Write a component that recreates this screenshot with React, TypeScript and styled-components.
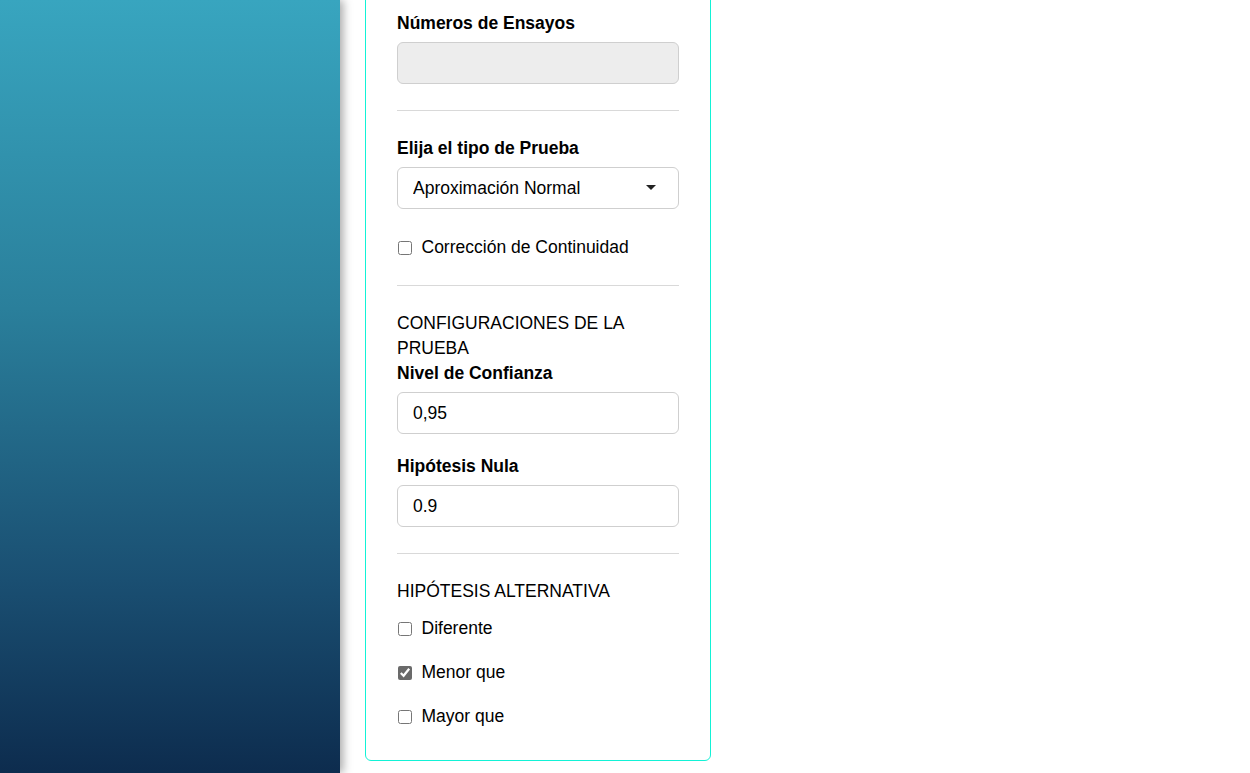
import styled, { createGlobalStyle } from 'styled-components';

const GlobalStyle = createGlobalStyle`
  html, body {
    margin: 0;
    padding: 0;
    background: #fff;
    overflow: hidden;
  }
  body {
    font-family: "Liberation Sans", Arial, sans-serif;
    color: #000;
  }
`;

const Layout = styled.div`
  display: flex;
  height: 773px;
`;

const Sidebar = styled.aside`
  flex: 0 0 340px;
  height: 100%;
  background: linear-gradient(180deg, #38a5bf 0%, #2a7f9b 40%, #1a4f72 75%, #0d2c4e 100%);
  box-shadow: 3px 0 9px rgba(0, 0, 0, 0.35);
  position: relative;
  z-index: 1;
`;

const Main = styled.main`
  flex: 1;
  padding-left: 25px;
`;

const Panel = styled.section`
  box-sizing: border-box;
  width: 346px;
  margin-top: -20px;
  padding: 30px 31px 31px;
  border: 1px solid #12f2d6;
  border-radius: 6px;
`;

const Field = styled.div<{ $gap?: number }>`
  display: flex;
  flex-direction: column;
  margin-bottom: ${(p) => p.$gap ?? 0}px;
`;

const Label = styled.label`
  font-size: 17.5px;
  font-weight: 700;
  line-height: 25px;
  margin-bottom: 6px;
`;

const Heading = styled.div`
  font-size: 17.5px;
  line-height: 25px;
  text-transform: uppercase;
`;

const Input = styled.input`
  box-sizing: border-box;
  height: 42px;
  width: 100%;
  padding: 0 15px;
  border: 1px solid #cfcfcf;
  border-radius: 6px;
  font-family: inherit;
  font-size: 17.5px;
  color: #000;
  background: #fff;
  outline: none;

  &:disabled {
    background: #ededed;
  }
`;

const SelectWrap = styled.div`
  position: relative;

  &::after {
    content: '';
    position: absolute;
    right: 23px;
    top: 18px;
    border-left: 5.5px solid transparent;
    border-right: 5.5px solid transparent;
    border-top: 5.5px solid #222;
    pointer-events: none;
  }
`;

const Select = styled.select`
  box-sizing: border-box;
  appearance: none;
  height: 42px;
  width: 100%;
  padding: 0 15px;
  border: 1px solid #cfcfcf;
  border-radius: 6px;
  font-family: inherit;
  font-size: 17.5px;
  color: #000;
  background: #fff;
  outline: none;
`;

const Divider = styled.hr<{ $top?: number }>`
  border: 0;
  border-top: 1px solid #d9d9d9;
  margin: ${(p) => p.$top ?? 26}px 0 25px;
`;

const CheckList = styled.div<{ $top?: number }>`
  display: flex;
  flex-direction: column;
  gap: 19px;
  margin-top: ${(p) => p.$top ?? 0}px;
`;

const CheckRow = styled.label`
  display: flex;
  align-items: center;
  gap: 10px;
  font-size: 17.5px;
  line-height: 25px;
`;

const Box = styled.input.attrs({ type: 'checkbox' })`
  width: 14px;
  height: 14px;
  margin: 0 0 0 0.5px;
  accent-color: #6a6a6a;
`;

export default function App() {
  return (
    <>
      <GlobalStyle />
      <Layout>
        <Sidebar />
        <Main>
          <Panel>
            <Field>
              <Label>Números de Ensayos</Label>
              <Input disabled />
            </Field>

            <Divider />

            <Field>
              <Label>Elija el tipo de Prueba</Label>
              <SelectWrap>
                <Select defaultValue="normal">
                  <option value="normal">Aproximación Normal</option>
                  <option value="binomial">Binomial Exacta</option>
                </Select>
              </SelectWrap>
            </Field>
            <CheckList $top={26}>
              <CheckRow>
                <Box />
                Corrección de Continuidad
              </CheckRow>
            </CheckList>

            <Divider $top={25} />

            <Heading>Configuraciones de la prueba</Heading>
            <Field $gap={20}>
              <Label>Nivel de Confianza</Label>
              <Input defaultValue="0,95" />
            </Field>
            <Field>
              <Label>Hipótesis Nula</Label>
              <Input defaultValue="0.9" />
            </Field>

            <Divider />

            <Heading>Hipótesis alternativa</Heading>
            <CheckList $top={12}>
              <CheckRow>
                <Box />
                Diferente
              </CheckRow>
              <CheckRow>
                <Box defaultChecked />
                Menor que
              </CheckRow>
              <CheckRow>
                <Box />
                Mayor que
              </CheckRow>
            </CheckList>
          </Panel>
        </Main>
      </Layout>
    </>
  );
}
